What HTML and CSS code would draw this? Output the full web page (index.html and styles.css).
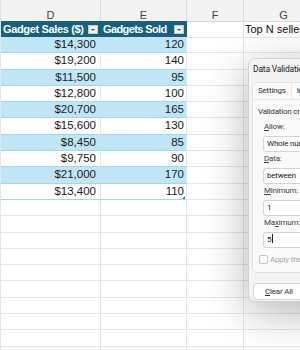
FILE: index.html
```html
<!DOCTYPE html>
<html lang="en">
<head>
    <meta charset="UTF-8">
    <title>Gadget Sales - Data Validation</title>
    <link rel="stylesheet" href="styles.css">
</head>
<body>

<div class="sheet">
    <div class="row colheads">
        <div class="ch">D</div>
        <div class="ch">E</div>
        <div class="ch">F</div>
        <div class="ch">G</div>
    </div>

    <div class="row thead">
        <div class="cell d th">Gadget Sales ($)<span class="dd"></span></div>
        <div class="cell e th th-narrow">Gadgets Sold<span class="dd"></span></div>
        <div class="cell f"></div>
        <div class="cell g note">Top N sellers</div>
    </div>

    <div class="row tbl band"><div class="cell d num">$14,300</div><div class="cell e num">120</div><div class="cell f"></div><div class="cell g"></div></div>
    <div class="row tbl"><div class="cell d num">$19,200</div><div class="cell e num">140</div><div class="cell f"></div><div class="cell g"></div></div>
    <div class="row tbl band"><div class="cell d num">$11,500</div><div class="cell e num">95</div><div class="cell f"></div><div class="cell g"></div></div>
    <div class="row tbl"><div class="cell d num">$12,800</div><div class="cell e num">100</div><div class="cell f"></div><div class="cell g"></div></div>
    <div class="row tbl band"><div class="cell d num">$20,700</div><div class="cell e num">165</div><div class="cell f"></div><div class="cell g"></div></div>
    <div class="row tbl"><div class="cell d num">$15,600</div><div class="cell e num">130</div><div class="cell f"></div><div class="cell g"></div></div>
    <div class="row tbl band"><div class="cell d num">$8,450</div><div class="cell e num">85</div><div class="cell f"></div><div class="cell g"></div></div>
    <div class="row tbl"><div class="cell d num">$9,750</div><div class="cell e num">90</div><div class="cell f"></div><div class="cell g"></div></div>
    <div class="row tbl band"><div class="cell d num">$21,000</div><div class="cell e num">170</div><div class="cell f"></div><div class="cell g"></div></div>
    <div class="row tbl last"><div class="cell d num">$13,400</div><div class="cell e num">110<span class="handle"></span></div><div class="cell f"></div><div class="cell g"></div></div>

    <div class="row"><div class="cell d"></div><div class="cell e"></div><div class="cell f"></div><div class="cell g"></div></div>
    <div class="row"><div class="cell d"></div><div class="cell e"></div><div class="cell f"></div><div class="cell g"></div></div>
    <div class="row"><div class="cell d"></div><div class="cell e"></div><div class="cell f"></div><div class="cell g"></div></div>
    <div class="row"><div class="cell d"></div><div class="cell e"></div><div class="cell f"></div><div class="cell g"></div></div>
    <div class="row"><div class="cell d"></div><div class="cell e"></div><div class="cell f"></div><div class="cell g"></div></div>
    <div class="row"><div class="cell d"></div><div class="cell e"></div><div class="cell f"></div><div class="cell g"></div></div>
    <div class="row"><div class="cell d"></div><div class="cell e"></div><div class="cell f"></div><div class="cell g"></div></div>
    <div class="row"><div class="cell d"></div><div class="cell e"></div><div class="cell f"></div><div class="cell g"></div></div>
    <div class="row"><div class="cell d"></div><div class="cell e"></div><div class="cell f"></div><div class="cell g"></div></div>
    <div class="row"><div class="cell d"></div><div class="cell e"></div><div class="cell f"></div><div class="cell g"></div></div>
</div>

<!-- Data Validation dialog floating over the sheet -->
<div class="dialog">
    <div class="dlg-title">Data Validation</div>
    <div class="panel">
        <div class="tabs">
            <div class="tab active">Settings</div>
            <div class="tab">Input Message</div>
            <div class="tab">Error Alert</div>
        </div>
        <div class="panel-body">
            <div class="section">Validation criteria</div>
            <div class="field">
                <div class="lbl"><u>A</u>llow:</div>
                <div class="box">Whole number</div>
                <div class="lbl"><u>D</u>ata:</div>
                <div class="box">between</div>
                <div class="lbl"><u>M</u>inimum:</div>
                <div class="box">1</div>
                <div class="lbl">Ma<u>x</u>imum:</div>
                <div class="box">5<span class="caret"></span></div>
            </div>
            <div class="check-row">
                <span class="checkbox"></span>
                <span class="check-text">Apply these changes to all other cells with the same settings</span>
            </div>
        </div>
    </div>
    <div class="dlg-buttons">
        <button class="btn"><u>C</u>lear All</button>
    </div>
</div>

</body>
</html>
```

FILE: styles.css
```css
body {
    margin: 0;
    width: 300px;
    height: 350px;
    overflow: hidden;
    position: relative;
    background-color: #fff;
    font-family: "Liberation Sans", Arial, sans-serif;
}

/* spreadsheet grid */
.sheet {
    border-left: 1px solid #e6e6e6;
}
.row {
    display: grid;
    grid-template-columns: 100px 86px 57px 80px;
    height: 16.3px;
}
.cell {
    box-sizing: border-box;
    border-right: 1px solid #e6e6e6;
    border-bottom: 1px solid #e6e6e6;
    white-space: nowrap;
    overflow: hidden;
    font-size: 11.5px;
    line-height: 15px;
    color: #1a1a1a;
}
.colheads {
    height: 21px;
    background-color: #f3f3f3;
}
.ch {
    box-sizing: border-box;
    border-right: 1px solid #dcdcdc;
    border-bottom: 1px solid #d9d9d9;
    text-align: center;
    font-size: 11px;
    line-height: 12px;
    padding-top: 9px;
    color: #444;
}
.thead {
    height: 16px;
}
.th {
    display: flex;
    justify-content: space-between;
    align-items: center;
    padding-left: 2px;
    background-color: #17607f;
    border-color: #17607f;
    color: #fff;
    font-weight: bold;
    font-size: 11px;
    letter-spacing: -0.35px;
}
.th-narrow {
    letter-spacing: -0.6px;
}
.dd {
    position: relative;
    width: 10px;
    height: 9px;
    margin-right: 2px;
    box-sizing: border-box;
    background-color: #f4f4f4;
    border: 1px solid #c8c8c8;
    flex-shrink: 0;
}
.dd::after {
    content: "";
    position: absolute;
    left: 2px;
    top: 3px;
    border-left: 2px solid transparent;
    border-right: 2px solid transparent;
    border-top: 2px solid #555;
}
.note {
    overflow: visible;
    padding-left: 1px;
    font-size: 11px;
    line-height: 16px;
    color: #111;
}
.num {
    text-align: right;
}
.num.d {
    padding-right: 4px;
}
.num.e {
    padding-right: 2px;
    position: relative;
}
.tbl .d,
.tbl .e {
    border-bottom-color: #a3d7f0;
}
.band .d,
.band .e {
    background-color: #c0e6f5;
}
.band .d {
    border-right-color: #c0e6f5;
}
.handle {
    position: absolute;
    right: 1px;
    bottom: 0;
    border-left: 3px solid transparent;
    border-bottom: 3px solid #2b79b3;
}

/* dialog */
.dialog {
    position: absolute;
    left: 248px;
    top: 58px;
    width: 220px;
    height: 244px;
    box-sizing: border-box;
    background-color: #f3f3f3;
    border: 1px solid #d2d2d2;
    border-radius: 7px;
    box-shadow: 0 10px 44px rgba(0, 0, 0, 0.3);
    font-family: Roboto, "Noto Sans", sans-serif;
    letter-spacing: -0.2px;
    color: #333;
}
.dlg-title {
    padding-left: 4px;
    line-height: 20px;
    font-size: 8.5px;
    color: #222;
}
.panel {
    box-sizing: border-box;
    height: 191px;
    margin: 3px 4px 0 3px;
    background-color: #fafafa;
    border: 1px solid #e2e2e2;
    border-radius: 5px;
}
.tabs {
    display: flex;
    height: 16px;
    border-bottom: 1px solid #e6e6e6;
}
.tab {
    padding: 0 5px 0 5px;
    line-height: 16px;
    font-size: 8px;
    border-right: 1px solid #e6e6e6;
    white-space: nowrap;
}
.panel-body {
    padding-left: 5px;
}
.section {
    margin-top: 6px;
    line-height: 12px;
    font-size: 8px;
}
.field {
    padding-left: 5px;
    margin-top: 3px;
}
.lbl {
    padding-left: 1px;
    line-height: 12px;
    font-size: 8px;
    color: #444;
}
.lbl u,
.btn u {
    text-underline-offset: 1px;
}
.box {
    box-sizing: border-box;
    height: 16px;
    margin: 3px 0 1px 0;
    padding-left: 3px;
    background-color: #fff;
    border: 1px solid #d4d4d4;
    border-radius: 3px;
    line-height: 14px;
    font-size: 8px;
    color: #222;
    white-space: nowrap;
}
.caret {
    display: inline-block;
    width: 1px;
    height: 9px;
    margin-left: 1px;
    vertical-align: -1px;
    background-color: #222;
}
.check-row {
    display: flex;
    align-items: center;
    margin-top: 7px;
    margin-left: 1px;
    white-space: nowrap;
}
.checkbox {
    width: 9px;
    height: 9px;
    box-sizing: border-box;
    border: 1px solid #c6c6c6;
    border-radius: 2px;
    background-color: #fdfdfd;
    flex-shrink: 0;
}
.check-text {
    margin-left: 2px;
    font-size: 8px;
    color: #a8a8a8;
}
.dlg-buttons {
    padding: 6px 0 0 4px;
}
.btn {
    box-sizing: border-box;
    width: 76px;
    height: 17px;
    padding: 0 0 0 11px;
    text-align: left;
    background-color: #fff;
    border: 1px solid #d6d6d6;
    border-radius: 4px;
    font-family: inherit;
    letter-spacing: inherit;
    font-size: 8px;
    color: #333;
}
```
